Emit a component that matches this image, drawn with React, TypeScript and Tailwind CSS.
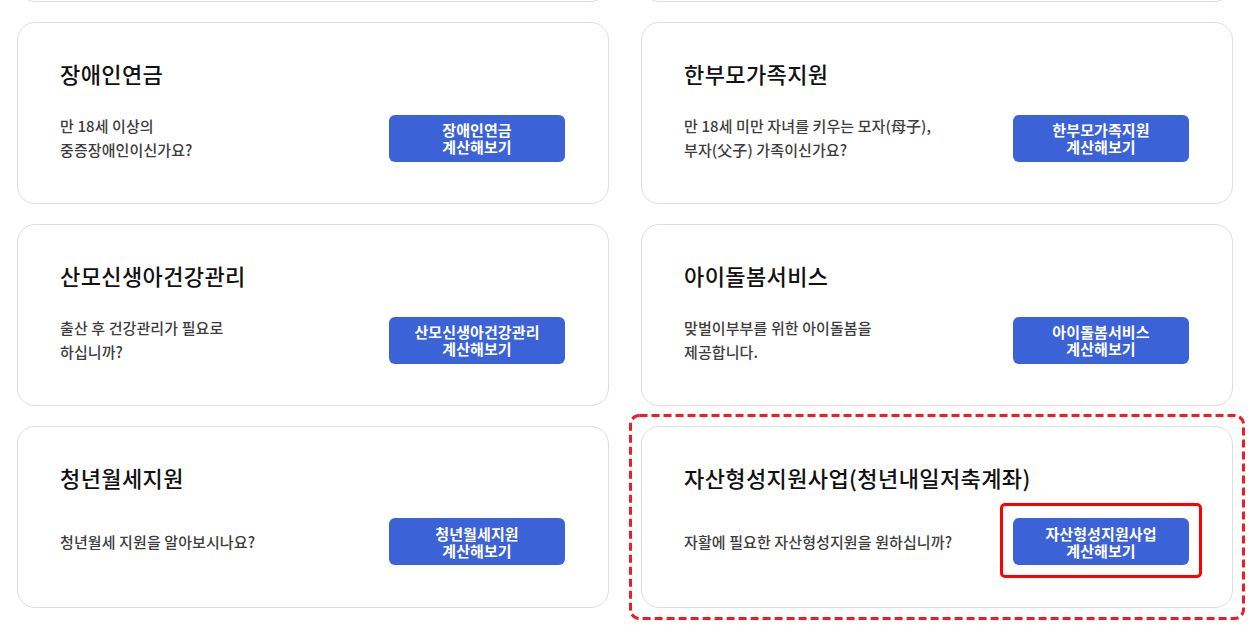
const cards = [
  { title: "", lines: [""], button: "", hidden: true },
  { title: "", lines: [""], button: "", hidden: true },
  {
    title: "장애인연금",
    lines: ["만 18세 이상의", "중증장애인이신가요?"],
    button: "장애인연금",
  },
  {
    title: "한부모가족지원",
    lines: ["만 18세 미만 자녀를 키우는 모자(母子),", "부자(父子) 가족이신가요?"],
    button: "한부모가족지원",
  },
  {
    title: "산모신생아건강관리",
    lines: ["출산 후 건강관리가 필요로", "하십니까?"],
    button: "산모신생아건강관리",
  },
  {
    title: "아이돌봄서비스",
    lines: ["맞벌이부부를 위한 아이돌봄을", "제공합니다."],
    button: "아이돌봄서비스",
  },
  {
    title: "청년월세지원",
    lines: ["청년월세 지원을 알아보시나요?"],
    button: "청년월세지원",
  },
  {
    title: "자산형성지원사업(청년내일저축계좌)",
    lines: ["자활에 필요한 자산형성지원을 원하십니까?"],
    button: "자산형성지원사업",
    highlight: true,
  },
];

function Card({
  title,
  lines,
  button,
  highlight,
}: {
  title: string;
  lines: string[];
  button: string;
  highlight?: boolean;
}) {
  return (
    <div className="relative">
      <div className="h-[182px] rounded-[18px] border border-[#dedede] bg-white pl-[42px] pr-[43px] pt-[35px]">
        <h3 className="text-[22px] leading-[30px] font-medium tracking-[0.4px] text-[#111]">{title}</h3>
        <div className="mt-[26px] flex items-center justify-between">
          <p className="text-[15px] leading-[24px] font-medium tracking-[0.1px] text-[#3d3d3d]">
            {lines.map((l, i) => (
              <span key={i} className="block">
                {l}
              </span>
            ))}
          </p>
          <div className="relative">
            <button className="flex h-[47px] w-[176px] flex-col items-center justify-center rounded-[6px] bg-[#3c62d7] text-[15px] leading-[17px] font-bold tracking-[0.1px] text-white">
              <span>{button}</span>
              <span>계산해보기</span>
            </button>
            {highlight && (
              <div className="pointer-events-none absolute -left-[13px] -right-[13px] -top-[15px] -bottom-[13px] rounded-[5px] border-[3px] border-[#f00]" />
            )}
          </div>
        </div>
      </div>
      {highlight && (
        <svg className="pointer-events-none absolute -inset-[12px] h-[calc(100%+24px)] w-[calc(100%+24px)] overflow-visible">
          <rect
            x="1.5"
            y="1.5"
            width="calc(100% - 3px)"
            height="calc(100% - 3px)"
            rx="9"
            fill="none"
            stroke="#ee1c24"
            strokeWidth="3"
            strokeDasharray="8 4"
          />
        </svg>
      )}
    </div>
  );
}

export default function App() {
  return (
    <div
      className="h-[625px] w-[1250px] overflow-hidden bg-white"
      style={{ fontFamily: '"Noto Sans CJK KR", "Noto Sans", sans-serif' }}
    >
      <div className="mt-[-180px] grid grid-cols-[592px_592px] gap-x-[32px] gap-y-[20px] pl-[17px]">
        {cards.map((c, i) =>
          c.hidden ? (
            <div key={i} className="h-[182px] rounded-[18px] border border-[#dedede] bg-white" />
          ) : (
            <Card key={i} title={c.title} lines={c.lines} button={c.button} highlight={c.highlight} />
          )
        )}
      </div>
    </div>
  );
}
